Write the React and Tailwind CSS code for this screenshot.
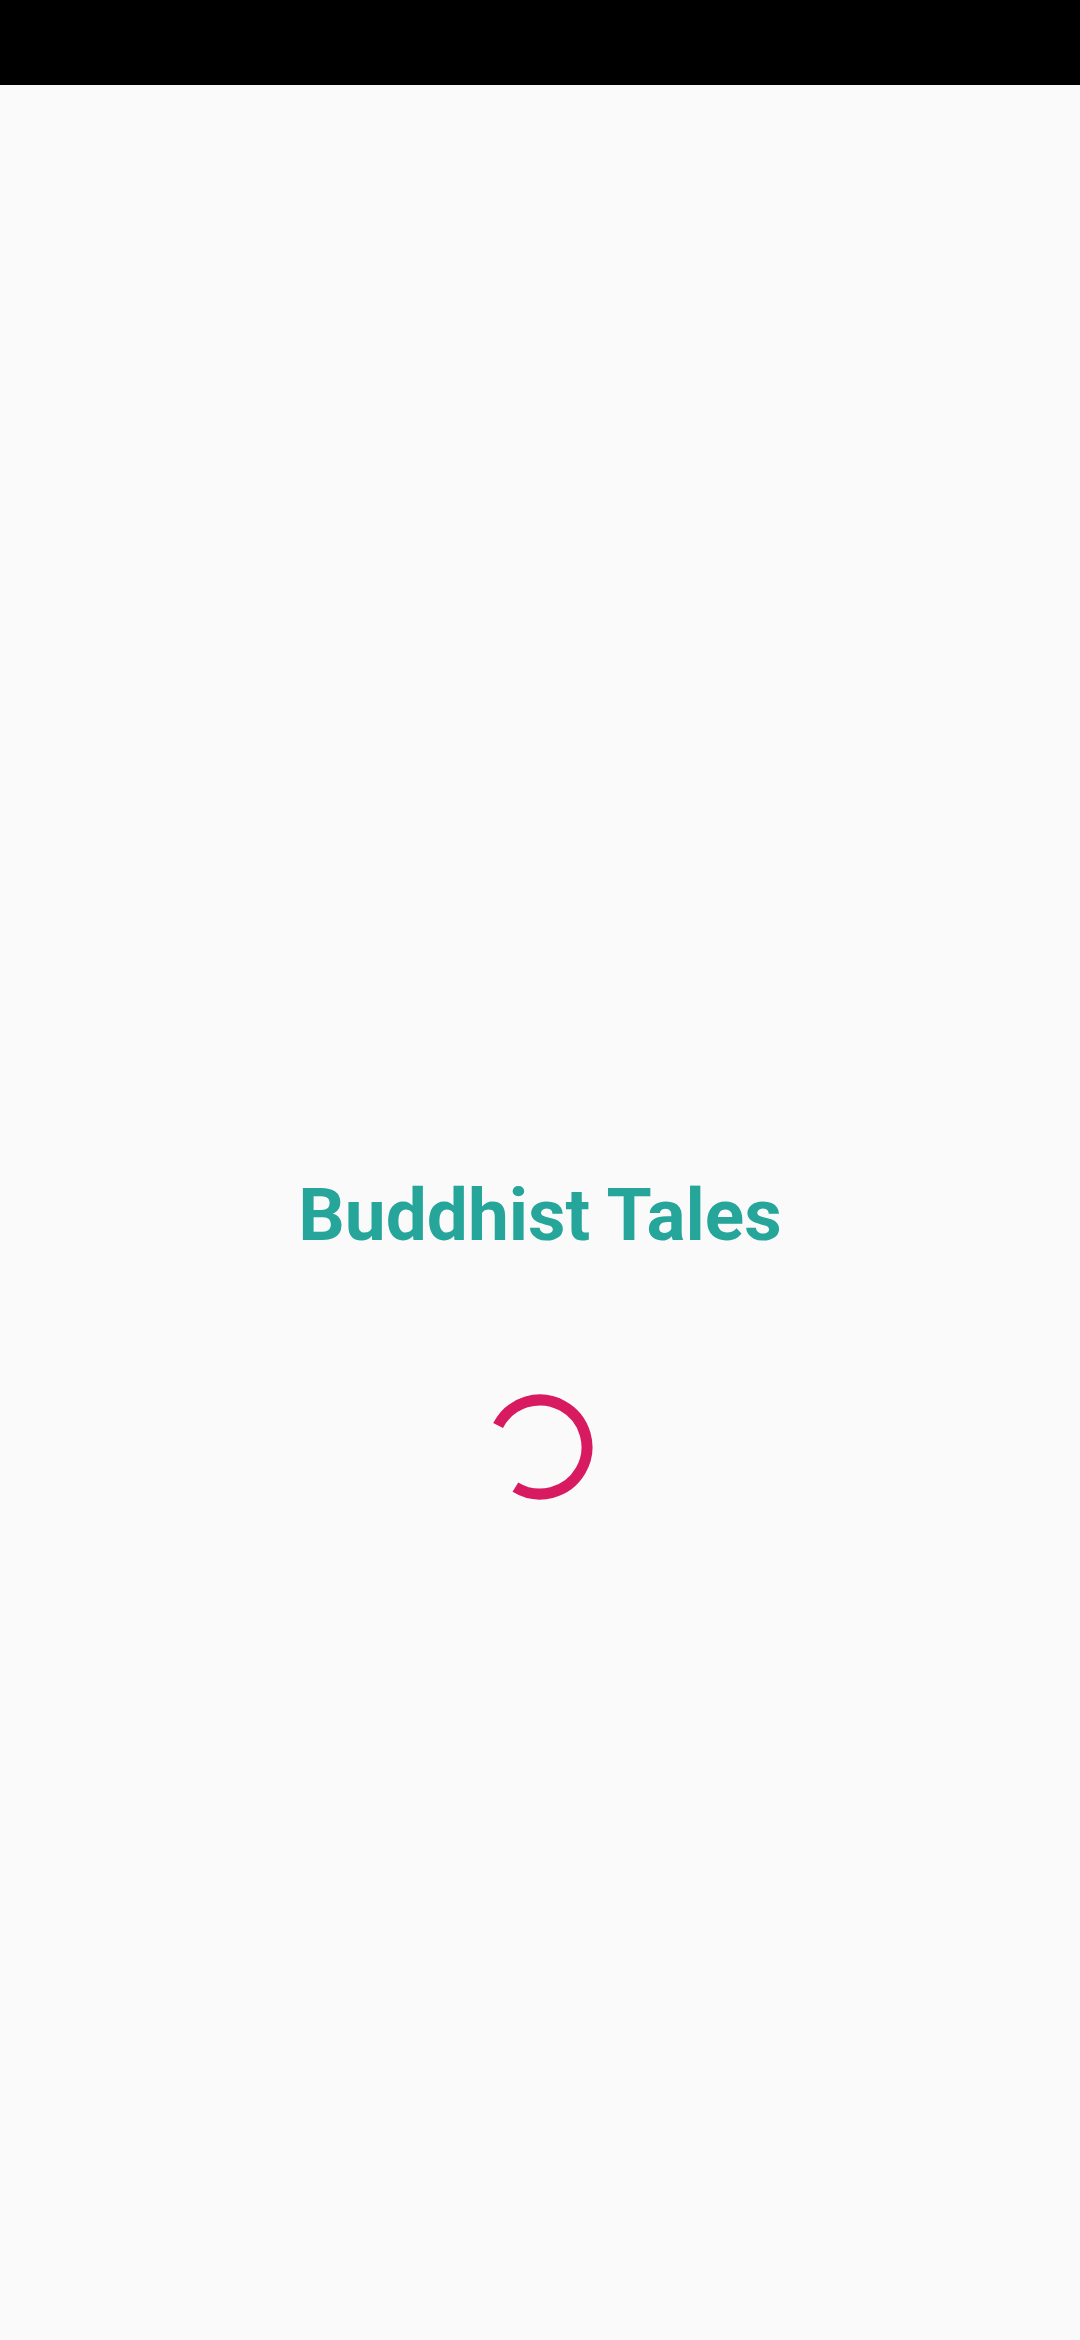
export default function App() {
  return (
    <div className="min-h-screen w-full bg-[#fafafa] flex flex-col" style={{ fontFamily: 'Roboto, "Noto Sans", sans-serif' }}>
      {/* status bar */}
      <div className="h-[85px] bg-black shrink-0" />

      {/* splash */}
      <div className="flex-1 flex flex-col items-center pt-[1094px]">
        <h1 className="text-[73px] leading-none font-bold text-[#26a69a]">Buddhist Tales</h1>
        <div className="mt-[142px]">
          <svg width="106" height="106" viewBox="0 0 106 106" fill="none">
            <path
              d="M 11.1 31.6 A 47 47 0 1 1 28.4 93.1"
              stroke="#d81b60"
              strokeWidth="11"
            />
          </svg>
        </div>
      </div>
    </div>
  );
}
